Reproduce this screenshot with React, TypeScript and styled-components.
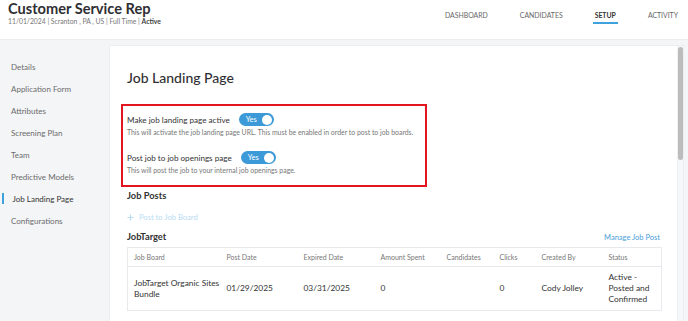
import styled, { createGlobalStyle } from 'styled-components'

const GlobalStyle = createGlobalStyle`
  html, body {
    margin: 0;
    padding: 0;
    background: #f4f5f7;
    font-family: Lato, "Open Sans", Arial, sans-serif;
    color: #333;
  }
  * { box-sizing: border-box; }
`

const Page = styled.div`
  width: 688px;
  height: 321px;
  overflow: hidden;
  display: flex;
  flex-direction: column;
`

const Header = styled.header`
  height: 40px;
  flex: none;
  background: #fff;
  border-bottom: 1px solid #ebedf0;
  display: flex;
  justify-content: space-between;
  align-items: flex-start;
  padding: 0 10px 0 8px;
`

const TitleBlock = styled.div``

const JobTitle = styled.h1`
  margin: 0;
  font-size: 14.6px;
  font-weight: 700;
  line-height: 18px;
  color: #2f2f33;
`

const Meta = styled.div`
  font-size: 6.8px;
  line-height: 9px;
  color: #777;
  margin-top: -1px;
  b { color: #444; font-weight: 700; }
`

const Nav = styled.nav`
  display: flex;
  gap: 32px;
  padding-top: 10px;
`

const NavItem = styled.a<{ $active?: boolean }>`
  font-size: 6.9px;
  line-height: 10px;
  text-transform: uppercase;
  color: ${(p) => (p.$active ? '#333' : '#666')};
  font-weight: ${(p) => (p.$active ? 700 : 400)};
  padding: 0 ${(p) => (p.$active ? '2px' : '0')} 2px;
  margin: 0 ${(p) => (p.$active ? '-2px' : '0')};
  border-bottom: 2px solid ${(p) => (p.$active ? '#3fa2dc' : 'transparent')};
`

const Body = styled.div`
  flex: 1;
  display: flex;
  min-height: 0;
`

const Sidebar = styled.aside`
  width: 109px;
  flex: none;
  padding-top: 16px;
  display: flex;
  flex-direction: column;
`

const SideItem = styled.div<{ $active?: boolean }>`
  position: relative;
  height: 22px;
  display: flex;
  align-items: center;
  font-size: 8px;
  color: ${(p) => (p.$active ? '#333' : '#6b6b6b')};
  padding-left: ${(p) => (p.$active ? '12.5px' : '11px')};
  &::before {
    content: '';
    display: ${(p) => (p.$active ? 'block' : 'none')};
    position: absolute;
    left: 2px;
    top: 5px;
    width: 2px;
    height: 11px;
    background: #3fa2dc;
  }
`

const Main = styled.main`
  flex: 1;
  padding: 5px 4px 0 0;
  min-width: 0;
`

const Card = styled.section`
  position: relative;
  height: 100%;
  background: #fff;
  border: 1px solid #eceef1;
  border-bottom: 0;
  overflow: hidden;
`

const ScrollTrack = styled.div`
  position: absolute;
  top: 0;
  right: 0;
  bottom: 0;
  width: 6px;
  background: #f6f7f9;
  border-left: 1px solid #eef0f2;
`

const ScrollThumb = styled.div`
  margin-top: 1px;
  width: 5px;
  height: 113px;
  border-radius: 3px;
  background: #bcbcbc;
`

const Content = styled.div`
  padding: 23px 23px 0 17px;
`

const PageTitle = styled.h2`
  margin: 0 0 17px;
  font-size: 14px;
  font-weight: 500;
  line-height: 18px;
  color: #2f2f33;
`

const Highlight = styled.div`
  border: 2px solid #e3161f;
  margin-left: -6px;
  width: 306px;
  padding: 7px 4px 10px;
  display: flex;
  flex-direction: column;
  gap: 14px;
`

const Setting = styled.div``

const SettingRow = styled.div`
  display: flex;
  align-items: center;
  gap: 9px;
  height: 13px;
`

const SettingLabel = styled.span`
  font-size: 8.1px;
  color: #333;
`

const Toggle = styled.span`
  width: 35px;
  height: 13px;
  border-radius: 7px;
  background: #3d9ad8;
  display: inline-flex;
  align-items: center;
  justify-content: space-between;
  padding: 0 1.5px 0 7px;
  color: #fff;
  font-size: 7.5px;
  &::after {
    content: '';
    width: 10px;
    height: 10px;
    border-radius: 50%;
    background: #fff;
  }
`

const SettingHint = styled.div`
  font-size: 6.9px;
  color: #777;
  margin-top: 2px;
  line-height: 9px;
  white-space: nowrap;
`

const SectionTitle = styled.h3<{ $top?: number }>`
  margin: ${(p) => p.$top ?? 0}px 0 0;
  font-size: 9.3px;
  font-weight: 700;
  color: #333;
  line-height: 12px;
`

const AddLink = styled.div`
  display: flex;
  align-items: center;
  gap: 5px;
  font-size: 7.6px;
  color: #b9dcf3;
  margin: 9px 0 8px;
  height: 12px;
`

const BoardHead = styled.div`
  display: flex;
  justify-content: space-between;
  align-items: center;
`

const ManageLink = styled.a`
  font-size: 7.5px;
  color: #4a9ed8;
`

const Table = styled.table`
  width: 534px;
  table-layout: fixed;
  border-collapse: collapse;
  border: 1px solid #e7e9ec;
  margin-top: 4px;
  th {
    text-align: left;
    font-weight: 400;
    font-size: 7px;
    color: #777;
    height: 19px;
    padding: 0 6px;
    border-bottom: 1px solid #e7e9ec;
  }
  td {
    font-size: 8.4px;
    color: #333;
    height: 44px;
    padding: 0 6px;
    line-height: 11px;
  }
  td:first-child {
    padding-right: 0;
  }
`

const columns = [
  { label: 'Job Board', width: 93 },
  { label: 'Post Date', width: 77 },
  { label: 'Expired Date', width: 77 },
  { label: 'Amount Spent', width: 66 },
  { label: 'Candidates', width: 53 },
  { label: 'Clicks', width: 42 },
  { label: 'Created By', width: 67 },
  { label: 'Status', width: 59 },
]

const sideItems = [
  'Details',
  'Application Form',
  'Attributes',
  'Screening Plan',
  'Team',
  'Predictive Models',
  'Job Landing Page',
  'Configurations',
]

export default function App() {
  return (
    <Page>
      <GlobalStyle />
      <Header>
        <TitleBlock>
          <JobTitle>Customer Service Rep</JobTitle>
          <Meta>
            11/01/2024 | Scranton , PA , US | Full Time | <b>Active</b>
          </Meta>
        </TitleBlock>
        <Nav>
          <NavItem>Dashboard</NavItem>
          <NavItem>Candidates</NavItem>
          <NavItem $active>Setup</NavItem>
          <NavItem>Activity</NavItem>
        </Nav>
      </Header>
      <Body>
        <Sidebar>
          {sideItems.map((item) => (
            <SideItem key={item} $active={item === 'Job Landing Page'}>
              {item}
            </SideItem>
          ))}
        </Sidebar>
        <Main>
          <Card>
            <Content>
              <PageTitle>Job Landing Page</PageTitle>
              <Highlight>
                <Setting>
                  <SettingRow>
                    <SettingLabel>Make job landing page active</SettingLabel>
                    <Toggle>Yes</Toggle>
                  </SettingRow>
                  <SettingHint>
                    This will activate the job landing page URL. This must be enabled in order to post to job boards.
                  </SettingHint>
                </Setting>
                <Setting>
                  <SettingRow>
                    <SettingLabel>Post job to job openings page</SettingLabel>
                    <Toggle>Yes</Toggle>
                  </SettingRow>
                  <SettingHint>This will post the job to your internal job openings page.</SettingHint>
                </Setting>
              </Highlight>
              <SectionTitle $top={3}>Job Posts</SectionTitle>
              <AddLink>
                <svg width="7" height="7" viewBox="0 0 8 8">
                  <path d="M4 0.5v7M0.5 4h7" stroke="#b9dcf3" strokeWidth="1.4" />
                </svg>
                Post to Job Board
              </AddLink>
              <BoardHead>
                <SectionTitle>JobTarget</SectionTitle>
                <ManageLink>Manage Job Post</ManageLink>
              </BoardHead>
              <Table>
                <colgroup>
                  {columns.map((c) => (
                    <col key={c.label} style={{ width: c.width }} />
                  ))}
                </colgroup>
                <thead>
                  <tr>
                    {columns.map((c) => (
                      <th key={c.label}>{c.label}</th>
                    ))}
                  </tr>
                </thead>
                <tbody>
                  <tr>
                    <td>JobTarget Organic Sites Bundle</td>
                    <td>01/29/2025</td>
                    <td>03/31/2025</td>
                    <td>0</td>
                    <td></td>
                    <td>0</td>
                    <td>Cody Jolley</td>
                    <td>Active - Posted and Confirmed</td>
                  </tr>
                </tbody>
              </Table>
            </Content>
            <ScrollTrack>
              <ScrollThumb />
            </ScrollTrack>
          </Card>
        </Main>
      </Body>
    </Page>
  )
}
